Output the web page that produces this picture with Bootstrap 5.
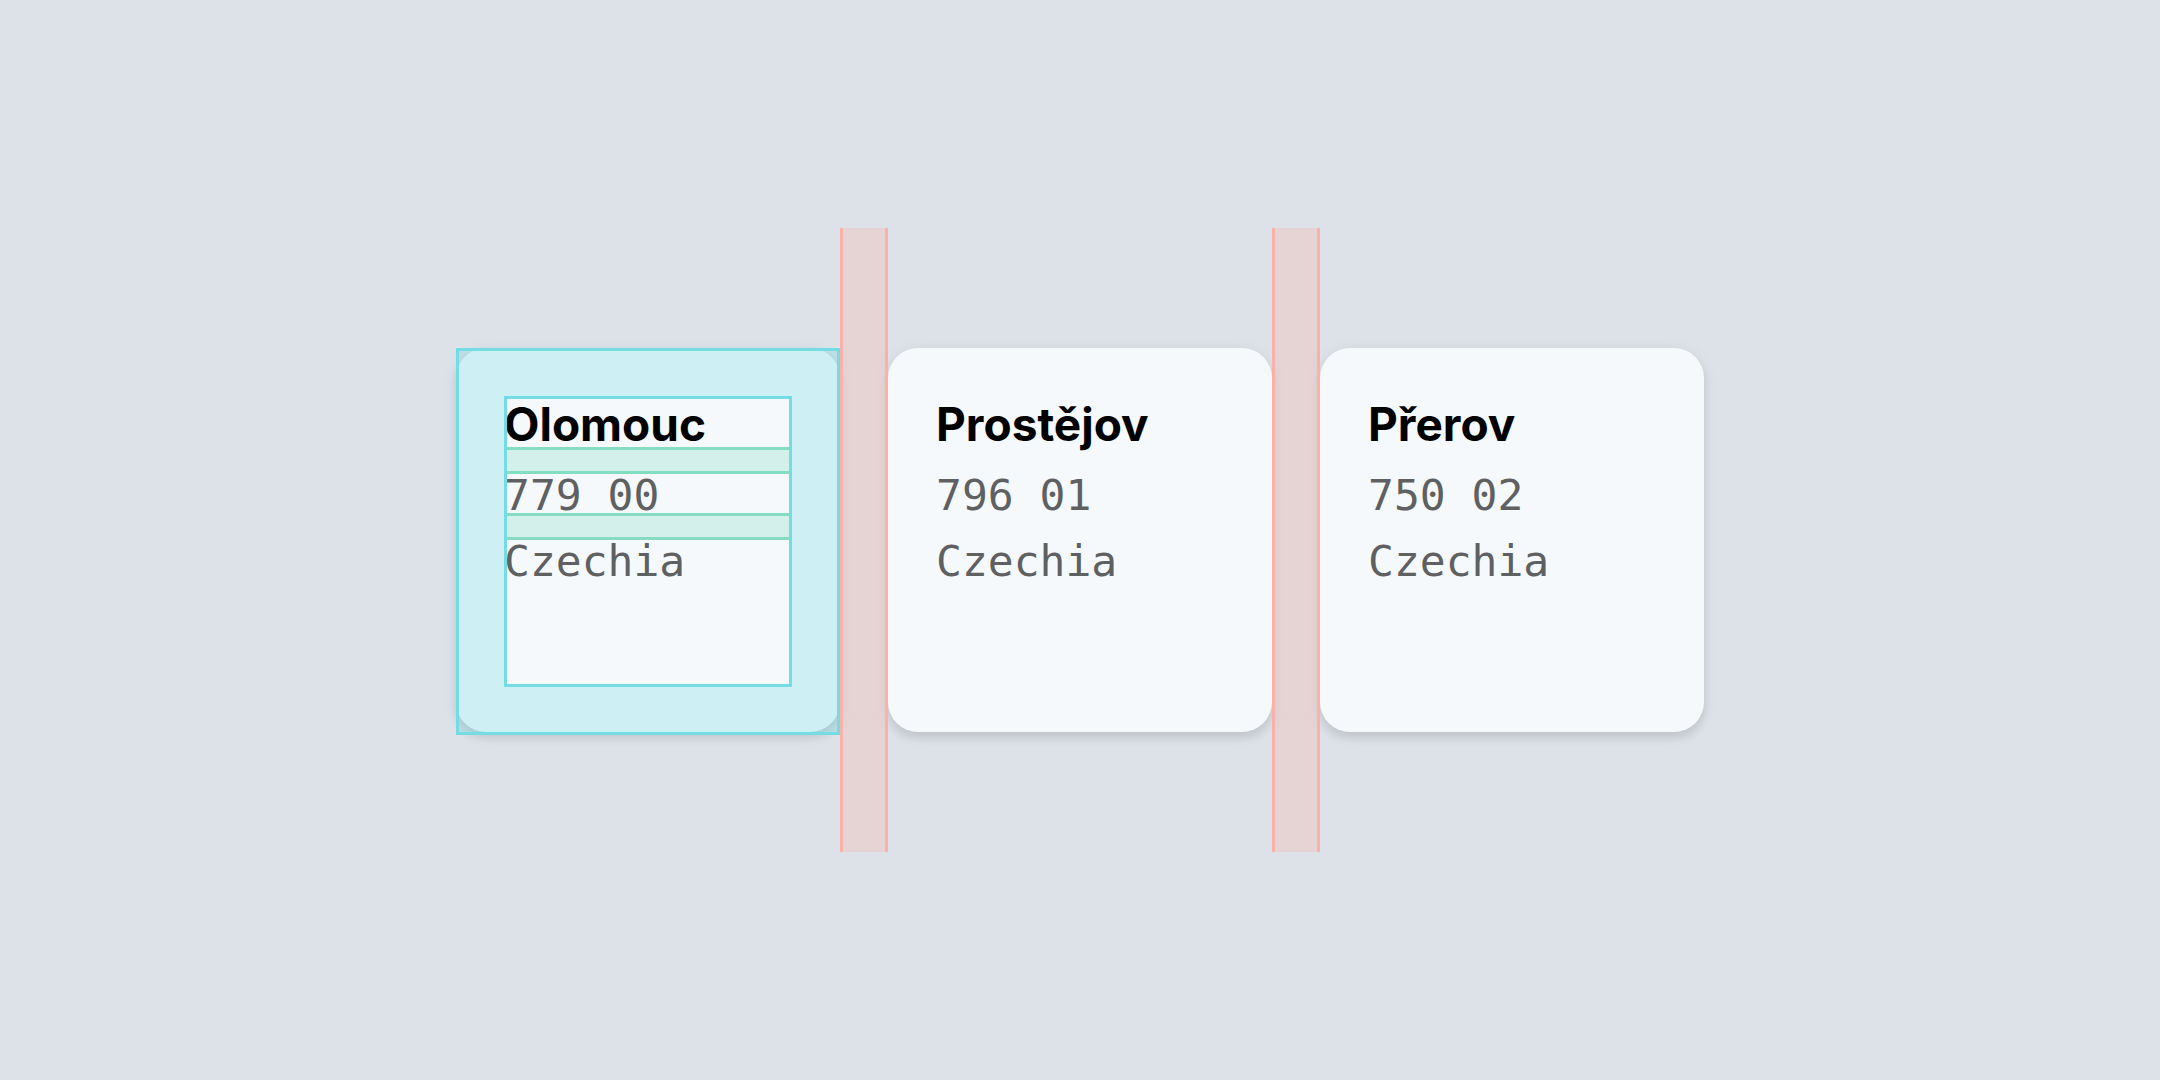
<!DOCTYPE html>
<html lang="en">
<head>
<meta charset="utf-8">
<meta name="viewport" content="width=device-width, initial-scale=1">
<title>Cities</title>
<link rel="stylesheet" href="https://cdn.jsdelivr.net/npm/bootstrap@5.3.0/dist/css/bootstrap.min.css">
<style>
  :root {
    --space: 48px;
    --line: 3px;
    --cyan: #74dce3;
    --cyan-fill: rgba(116, 220, 227, .3);
    --green: #84dcc1;
    --green-fill: rgba(132, 220, 193, .3);
    --coral: #fbb1a7;
    --coral-fill: rgba(255, 180, 167, .28);
  }
  body { background: #dde1e8; }
  .city {
    width: 384px;
    aspect-ratio: 1;
    padding: var(--space);
    border-radius: 30px;
    background: #f5f9fc;
    box-shadow: 0 6px 9px rgba(0, 0, 0, .08), 0 3px 16px rgba(0, 0, 0, .07);
  }
  .city-name { padding-top: 3px; font: 700 46px/51px Inter, sans-serif; color: #000; }
  .city-line { font: 43px/42px "DejaVu Sans Mono", monospace; color: #5f6062; }
  /* vertical gap between two lines of a card */
  .stack-gap { height: 27px; margin-top: calc(-1 * var(--line)); }
  .stack-gap.shown {
    border: solid var(--green);
    border-width: var(--line) 0;
    background: var(--green-fill);
  }
  /* horizontal gap between two cards */
  .column-gap-guide {
    width: var(--space);
    height: 624px;
    z-index: 1;
    border: solid var(--coral);
    border-width: 0 var(--line);
    background: var(--coral-fill);
  }
  /* padding of a card: outer edge, tinted frame, inner edge */
  .padding-guide { inset: 0 0 calc(-1 * var(--line)); border: var(--line) solid var(--cyan); }
  .padding-guide::before {
    content: "";
    position: absolute;
    inset: 0;
    border: 45px solid var(--cyan-fill);
  }
  .padding-guide::after {
    content: "";
    position: absolute;
    inset: 45px;
    border: var(--line) solid var(--cyan);
  }
</style>
</head>
<body>
<main class="d-flex justify-content-center align-items-center min-vh-100">
  <article class="city position-relative flex-shrink-0">
    <h2 class="city-name m-0">Olomouc</h2>
    <div class="stack-gap shown"></div>
    <p class="city-line m-0">779 00</p>
    <div class="stack-gap shown"></div>
    <p class="city-line m-0">Czechia</p>
    <div class="padding-guide position-absolute"></div>
  </article>
  <div class="column-gap-guide position-relative flex-shrink-0"></div>
  <article class="city flex-shrink-0">
    <h2 class="city-name m-0">Prostějov</h2>
    <div class="stack-gap"></div>
    <p class="city-line m-0">796 01</p>
    <div class="stack-gap"></div>
    <p class="city-line m-0">Czechia</p>
  </article>
  <div class="column-gap-guide position-relative flex-shrink-0"></div>
  <article class="city flex-shrink-0">
    <h2 class="city-name m-0">Přerov</h2>
    <div class="stack-gap"></div>
    <p class="city-line m-0">750 02</p>
    <div class="stack-gap"></div>
    <p class="city-line m-0">Czechia</p>
  </article>
</main>
<script src="https://cdn.jsdelivr.net/npm/bootstrap@5.3.0/dist/js/bootstrap.bundle.min.js"></script>
</body>
</html>
